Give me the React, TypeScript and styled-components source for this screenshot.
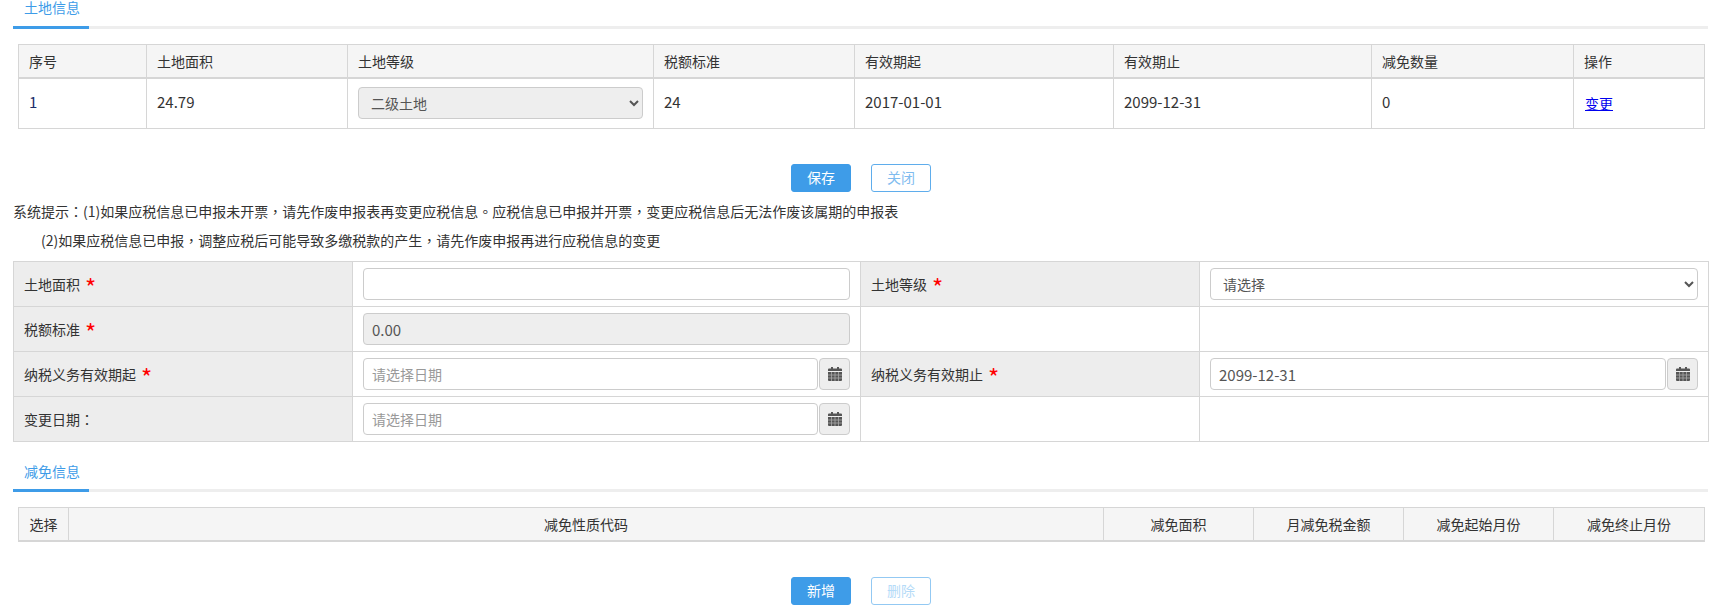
import React from "react";
import styled, { createGlobalStyle } from "styled-components";

const Global = createGlobalStyle`
  html, body { margin: 0; padding: 0; background: #fff; }
  body { font-family: "Noto Sans CJK SC", "Liberation Sans", sans-serif; font-size: 14px; color: #333; }
  * { box-sizing: border-box; }
`;

const Page = styled.div`
  width: 1722px;
  height: 612px;
  overflow: hidden;
  padding: 0 14px 0 13px;
`;

const TabBar = styled.div<{ $top?: number }>`
  height: 29px;
  margin-top: ${(p) => p.$top ?? 0}px;
  border-bottom: 3px solid #eee;
  display: flex;
`;

const Tab = styled.div<{ $drop?: number }>`
  width: 76px;
  height: 29px;
  line-height: 14px;
  padding: ${(p) => p.$drop ?? 0}px 0 0 11px;
  color: #3e9ce8;
  border-bottom: 3px solid #3e9ce8;
`;

const DataTable = styled.table<{ $top: number }>`
  border-collapse: collapse;
  table-layout: fixed;
  width: 1686px;
  margin: ${(p) => p.$top}px 0 0 5px;
`;

const Th = styled.th<{ $center?: boolean }>`
  height: 33px;
  padding: 0 10px;
  background: #f5f5f5;
  border: 1px solid #d6d6d6;
  border-bottom: 2px solid #d6d6d6;
  font-weight: 400;
  text-align: ${(p) => (p.$center ? "center" : "left")};
`;

const Td = styled.td`
  height: 51px;
  padding: 0 10px 3px;
  border: 1px solid #d6d6d6;
  color: #333;
  font-size: 15px;
`;

const SelectCell = styled(Td)`
  padding: 0 10px;
  font-size: 14px;
`;

const LinkCell = styled(Td)`
  padding: 0 11px 1px;
  font-size: 14px;
`;

const IdCell = styled(Td)`
  color: #1c2f6b;
`;

const TableLink = styled.a`
  color: #0000ee;
  text-decoration: underline;
`;

const Select = styled.select`
  width: 100%;
  height: 32px;
  padding: 0 8px;
  border: 1px solid #ccc;
  border-radius: 4px;
  background-color: #fff;
  color: #555;
  font: inherit;
  &:disabled {
    background-color: #eee;
    color: #555;
    opacity: 1;
  }
`;

const Actions = styled.div<{ $top: number }>`
  display: flex;
  justify-content: center;
  gap: 20px;
  margin-top: ${(p) => p.$top}px;
  width: 1696px;
`;

const Primary = styled.button`
  width: 60px;
  height: 28px;
  padding: 0 0 2px;
  border: 1px solid #3e9ce8;
  border-radius: 3px;
  background: #3e9ce8;
  color: #fff;
  font: inherit;
`;

const Outline = styled.button<{ $faded?: boolean }>`
  width: 60px;
  height: 28px;
  padding: 0 0 2px;
  border: 1px solid ${(p) => (p.$faded ? "#93c9f3" : "#5fadec")};
  border-radius: 3px;
  background: #fff;
  color: ${(p) => (p.$faded ? "#b5dbf8" : "#7fbcef")};
  font: inherit;
`;

const Hint = styled.p<{ $indent?: boolean; $top: number }>`
  margin: ${(p) => p.$top}px 0 0;
  padding-left: ${(p) => (p.$indent ? 28 : 0)}px;
  line-height: 20px;
  height: 20px;
  color: #333;
  white-space: nowrap;
  text-spacing-trim: space-all;
`;

const Punct = styled.span`
  font-family: "Noto Sans CJK TC", sans-serif;
`;

const FormTable = styled.table`
  border-collapse: collapse;
  table-layout: fixed;
  width: 1695px;
  margin-top: 11px;
`;

const Label = styled.td`
  height: 45px;
  padding: 0 10px;
  background: #ededed;
  border: 1px solid #d6d6d6;
  color: #333;
`;

const Field = styled.td`
  height: 45px;
  padding: 0 10px;
  border: 1px solid #d6d6d6;
`;

const Star = styled.span`
  color: #f00;
  margin-left: 5px;
  font-size: 24px;
  line-height: 14px;
  vertical-align: -7px;
`;

const Input = styled.input<{ $numeric?: boolean }>`
  display: block;
  width: 100%;
  height: 32px;
  padding: 0 8px;
  border: 1px solid #ccc;
  border-radius: 4px;
  background: #fff;
  color: #555;
  font: inherit;
  font-size: ${(p) => (p.$numeric ? 15 : 14)}px;
  &::placeholder { color: #999; opacity: 1; }
  &:disabled { background: #eee; opacity: 1; }
`;

const InputGroup = styled.div`
  display: flex;
  gap: 1px;
`;

const Addon = styled.div`
  flex: 0 0 31px;
  height: 32px;
  display: flex;
  align-items: center;
  justify-content: center;
  background: #eee;
  border: 1px solid #ccc;
  border-radius: 4px;
`;

const Calendar = () => (
  <svg width="14" height="14" viewBox="0 0 14 14" aria-hidden="true">
    <path
      fill="#555"
      d="M3 0h2v1.500h4V0h2v1.500h2a1 1 0 0 1 1 1V4H0V2.500a1 1 0 0 1 1-1h2zM0 5h14v8a1 1 0 0 1-1 1H1a1 1 0 0 1-1-1z"
    />
    <path stroke="#aaa" strokeWidth="0.8" d="M0 8h14M0 11h14M3.500 5v9M7 5v9M10.500 5v9" />
  </svg>
);

const DateField = ({ value, placeholder }: { value?: string; placeholder?: string }) => (
  <InputGroup>
    <Input $numeric={!!value} defaultValue={value} placeholder={placeholder} />
    <Addon>
      <Calendar />
    </Addon>
  </InputGroup>
);

const landCols = [128, 201, 306, 201, 259, 258, 202, 131];
const reliefCols = [50, 1035, 150, 150, 150, 151];
const formCols = [339, 508, 339, 509];

export default function App() {
  return (
    <Page>
      <Global />
      <TabBar>
        <Tab>土地信息</Tab>
      </TabBar>
      <DataTable $top={15}>
        <colgroup>
          {landCols.map((w, i) => (
            <col key={i} width={w} />
          ))}
        </colgroup>
        <thead>
          <tr>
            {["序号", "土地面积", "土地等级", "税额标准", "有效期起", "有效期止", "减免数量", "操作"].map((h) => (
              <Th key={h}>{h}</Th>
            ))}
          </tr>
        </thead>
        <tbody>
          <tr>
            <IdCell>1</IdCell>
            <Td>24.79</Td>
            <SelectCell>
              <Select disabled defaultValue="2">
                <option value="2">二级土地</option>
              </Select>
            </SelectCell>
            <Td>24</Td>
            <Td>2017-01-01</Td>
            <Td>2099-12-31</Td>
            <Td>0</Td>
            <LinkCell>
              <TableLink href="#">变更</TableLink>
            </LinkCell>
          </tr>
        </tbody>
      </DataTable>

      <Actions $top={35}>
        <Primary>保存</Primary>
        <Outline>关闭</Outline>
      </Actions>

      <Hint $top={9}>
        系统提示<Punct>：</Punct>(1)如果应税信息已申报未开票<Punct>，</Punct>请先作废申报表再变更应税信息<Punct>。</Punct>应税信息已申报并开票<Punct>，</Punct>变更应税信息后无法作废该属期的申报表
      </Hint>
      <Hint $indent $top={9}>
        (2)如果应税信息已申报<Punct>，</Punct>调整应税后可能导致多缴税款的产生<Punct>，</Punct>请先作废申报再进行应税信息的变更
      </Hint>

      <FormTable>
        <colgroup>
          {formCols.map((w, i) => (
            <col key={i} width={w} />
          ))}
        </colgroup>
        <tbody>
          <tr>
            <Label>土地面积<Star>*</Star></Label>
            <Field><Input /></Field>
            <Label>土地等级<Star>*</Star></Label>
            <Field>
              <Select defaultValue="">
                <option value="">请选择</option>
              </Select>
            </Field>
          </tr>
          <tr>
            <Label>税额标准<Star>*</Star></Label>
            <Field><Input $numeric disabled defaultValue="0.00" /></Field>
            <Field />
            <Field />
          </tr>
          <tr>
            <Label>纳税义务有效期起<Star>*</Star></Label>
            <Field><DateField placeholder="请选择日期" /></Field>
            <Label>纳税义务有效期止<Star>*</Star></Label>
            <Field><DateField value="2099-12-31" /></Field>
          </tr>
          <tr>
            <Label>变更日期<Punct>：</Punct></Label>
            <Field><DateField placeholder="请选择日期" /></Field>
            <Field />
            <Field />
          </tr>
        </tbody>
      </FormTable>

      <TabBar $top={21}>
        <Tab $drop={1}>减免信息</Tab>
      </TabBar>
      <DataTable $top={15}>
        <colgroup>
          {reliefCols.map((w, i) => (
            <col key={i} width={w} />
          ))}
        </colgroup>
        <thead>
          <tr>
            {["选择", "减免性质代码", "减免面积", "月减免税金额", "减免起始月份", "减免终止月份"].map((h) => (
              <Th key={h} $center>{h}</Th>
            ))}
          </tr>
        </thead>
      </DataTable>

      <Actions $top={35}>
        <Primary>新增</Primary>
        <Outline $faded>删除</Outline>
      </Actions>
    </Page>
  );
}
